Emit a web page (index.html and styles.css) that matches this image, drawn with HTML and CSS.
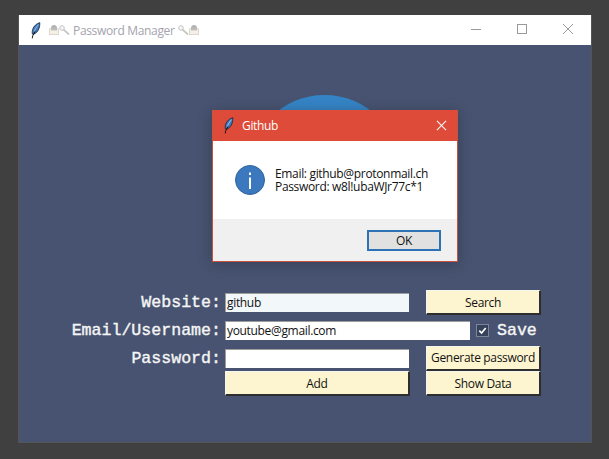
FILE: index.html
```html
<!DOCTYPE html>
<html lang="en">
<head>
<meta charset="utf-8">
<title>Password Manager</title>
<link rel="stylesheet" href="styles.css">
</head>
<body>
<svg class="defs" width="0" height="0" aria-hidden="true">
  <defs>
    <symbol id="feather" viewBox="0 0 12 20">
      <path d="M10.600 .6C7 1.400 3.200 4.600 2 8.600c-.6 2-.8 3.800-.5 5.400l.9.7C6 13.800 8.400 11 9.600 7.600c.8-2.400 1.200-4.800 1-7z" fill="#3f78bd" stroke="#14202e" stroke-width=".9"/>
      <path d="M9 3C6.800 5.400 5 8.400 3.900 11.300" fill="none" stroke="#a9cdee" stroke-width="1.100"/>
      <path d="M5 11 2 16.500 1.500 19.500" fill="none" stroke="#0d0d0d" stroke-width="1.100"/>
    </symbol>
    <symbol id="lock" viewBox="0 0 10 10">
      <path d="M2.500 4V2.500C2.500 1.200 3.500.5 5 .5s2.500.7 2.500 2V4" fill="#b5b5b5" stroke="#aaa" stroke-width=".8"/>
      <rect x=".5" y="3.800" width="9" height="5.800" fill="#f6efe6" stroke="#d6cfc8" stroke-width=".8"/>
      <rect x="2" y="3" width="6" height="2.400" fill="#bbb"/>
    </symbol>
    <symbol id="key" viewBox="0 0 11 10">
      <circle cx="3" cy="3" r="2.300" fill="#f6f6f6" stroke="#c4c4c4" stroke-width="1"/>
      <path d="M4.600 4.600 10 9.500" stroke="#c4c4c4" stroke-width="1.700" fill="none"/>
    </symbol>
  </defs>
</svg>
<main class="window">
  <header class="titlebar">
    <svg class="feather"><use href="#feather"/></svg>
    <div class="title">
      <svg class="glyph-lock"><use href="#lock"/></svg>
      <svg class="glyph-key"><use href="#key"/></svg>
      <span class="title-text">Password Manager</span>
      <svg class="glyph-key"><use href="#key"/></svg>
      <svg class="glyph-lock"><use href="#lock"/></svg>
    </div>
    <div class="controls">
      <svg class="control" viewBox="0 0 46 30"><path d="M18 14.500h10" stroke="#9a9a9a" fill="none"/></svg>
      <svg class="control" viewBox="0 0 46 30"><rect x="18.500" y="9.500" width="9" height="9" stroke="#9a9a9a" fill="none"/></svg>
      <svg class="control" viewBox="0 0 46 30"><path d="M18 9l10 10M28 9 18 19" stroke="#9a9a9a" fill="none"/></svg>
    </div>
  </header>
  <div class="content">
    <div class="logo"></div>
    <form class="form">
      <label class="label">Website:</label>
      <div class="entry entry-short entry-tinted">github</div>
      <button type="button" class="btn btn-side">Search</button>

      <label class="label">Email/Username:</label>
      <div class="email-row">
        <div class="entry entry-wide">youtube@gmail.com</div>
        <span class="check">
          <svg viewBox="0 0 12 12" class="tick"><path d="M2.500 6.200 5 8.800 9.500 3.200" fill="none" stroke="#fff" stroke-width="1.800"/></svg>
        </span>
        <span class="label save">Save</span>
      </div>

      <label class="label">Password:</label>
      <div class="entry entry-short"></div>
      <button type="button" class="btn btn-side">Generate password</button>

      <button type="button" class="btn btn-add">Add</button>
      <button type="button" class="btn btn-side">Show Data</button>
    </form>
  </div>

  <section class="dialog">
    <header class="dialog-title">
      <svg class="feather feather-dialog"><use href="#feather"/></svg>
      <span class="dialog-name">Github</span>
      <svg class="dialog-close" viewBox="0 0 12 12"><path d="M1 1l10 10M11 1 1 11" stroke="#fff" stroke-width="1.100" fill="none"/></svg>
    </header>
    <div class="dialog-body">
      <svg class="info" viewBox="0 0 30 30">
        <circle cx="15" cy="15" r="14.500" fill="#3b78bd" stroke="#2f639e"/>
        <rect x="14" y="12.500" width="2" height="11.500" fill="#fff"/>
        <rect x="14" y="7.500" width="2" height="2.500" fill="#fff"/>
      </svg>
      <p class="message">Email: github@protonmail.ch<br>Password: w8l!ubaWJr77c*1</p>
    </div>
    <footer class="dialog-foot">
      <button type="button" class="ok">OK</button>
    </footer>
  </section>
</main>
</body>
</html>
```
FILE: styles.css
```css
* { box-sizing: border-box; }

html, body { height: 100%; }

body {
  margin: 0;
  padding: 15px 17px 16px 18px;
  background: #404040;
  font-family: "Open Sans", "Noto Sans", sans-serif;
  font-size: 12px;
  letter-spacing: -.33px;
  color: #111;
  overflow: hidden;
}

.defs { position: absolute; }

.window {
  position: relative;
  width: 574px;
  height: 428px;
  display: flex;
  flex-direction: column;
  background: #475370;
  border: 1px solid #555;
  border-top: 0;
}

.titlebar {
  height: 30px;
  flex: none;
  display: flex;
  align-items: center;
  background: #fff;
}

.feather {
  width: 10px;
  height: 17px;
  flex: none;
  margin-left: 12px;
}

.title {
  display: flex;
  align-items: center;
  margin-left: 8px;
  flex: 1;
}

.title-text {
  color: #a3a3ad;
  margin: 0 3px 0 3px;
  white-space: nowrap;
}

.glyph-lock { width: 10px; height: 10px; flex: none; }
.glyph-key { width: 11px; height: 10px; flex: none; }

.controls { display: flex; flex: none; }
.control { width: 46px; height: 30px; display: block; }

.content {
  flex: 1;
  padding-top: 50px;
}

.logo {
  width: 153px;
  height: 153px;
  margin-left: 229px;
  border-radius: 50%;
  background: #3584c6;
}

.form {
  margin-top: 42px;
  display: grid;
  grid-template-columns: 202px 184px 114px;
  grid-template-rows: 25px 30px 26px 25px;
  column-gap: 0;
  align-items: center;
}

.label {
  font-family: "Liberation Mono", monospace;
  font-weight: 400;
  letter-spacing: 0;
  -webkit-text-stroke: .4px #f5f5f5;
  font-size: 16.600px;
  color: #f5f5f5;
  text-align: right;
  white-space: nowrap;
}

.entry {
  height: 19px;
  margin-left: 4px;
  padding-left: 1px;
  background: #fff;
  border-top: 1px solid #9c9c9c;
  border-left: 1px solid #9c9c9c;
  line-height: 18px;
  color: #111;
  white-space: nowrap;
}

.entry-short { width: 184px; }
.entry-tinted { background: #f2f7f9; }
.entry-wide { width: 245px; flex: none; }

.email-row {
  grid-column: 2 / span 2;
  display: flex;
  align-items: center;
}

.check {
  width: 13px;
  height: 13px;
  flex: none;
  margin-left: 6px;
  background: #36415c;
  border: 1px solid #7d8699;
  display: flex;
}

.tick { width: 11px; height: 11px; display: block; }

.save { margin-left: 8px; }

.btn {
  height: 25px;
  padding: 0;
  font: inherit;
  letter-spacing: inherit;
  color: #111;
  background: #fdf5d0;
  border: 0;
  border-right: 2px solid #2e2e2e;
  border-bottom: 2px solid #2e2e2e;
  border-top: 1px solid #f6f6f0;
  border-left: 1px solid #f6f6f0;
  white-space: nowrap;
}

.btn-side {
  width: 115px;
  margin-left: 21px;
  grid-column: 3;
}

.btn-add {
  grid-column: 2;
  width: 185px;
  margin-left: 4px;
}

.dialog {
  position: absolute;
  left: 193px;
  top: 95px;
  width: 246px;
  height: 152px;
  display: flex;
  flex-direction: column;
  background: #fff;
  border: 1px solid #c9513f;
  border-top: 0;
  box-shadow: 0 2px 12px rgba(30, 30, 40, .35);
}

.dialog-title {
  height: 31px;
  flex: none;
  display: flex;
  align-items: center;
  background: #df4b39;
  color: #fff;
}

.feather-dialog { margin-left: 11px; }

.dialog-name { margin-left: 8px; flex: 1; }

.dialog-close { width: 11px; height: 11px; margin-right: 10px; flex: none; }

.dialog-body {
  flex: 1;
  display: flex;
  align-items: center;
  padding: 0 0 0 22px;
}

.info { width: 30px; height: 30px; flex: none; }

.message {
  margin: 0 0 0 10px;
  line-height: 13px;
  color: #111;
  white-space: nowrap;
}

.dialog-foot {
  height: 42px;
  flex: none;
  display: flex;
  align-items: center;
  justify-content: flex-end;
  padding: 0 16px 0 0;
  background: #f0f0f0;
}

.ok {
  width: 74px;
  height: 21px;
  padding: 0;
  font: inherit;
  letter-spacing: inherit;
  color: #111;
  background: #e1e1e1;
  border: 2px solid #2d72b5;
}
```
